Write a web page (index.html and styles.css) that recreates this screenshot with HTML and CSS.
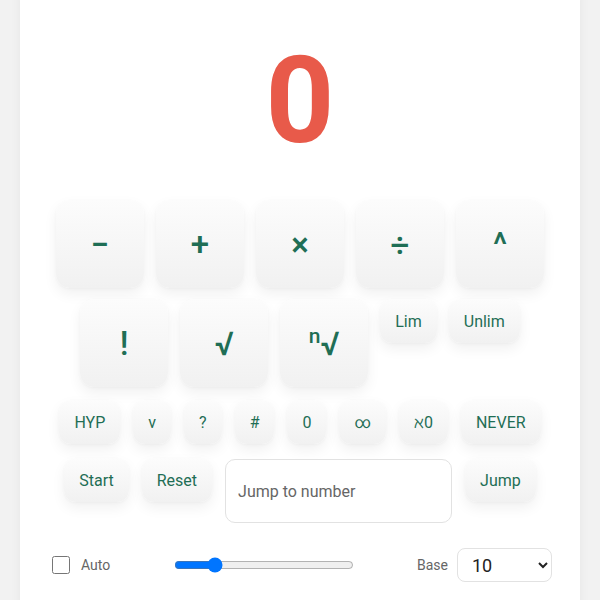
FILE: index.html
```html
<!DOCTYPE html>
<html lang="en">
<head>
<meta charset="UTF-8">
<meta name="viewport" content="width=device-width, initial-scale=1.0">
<title>Counter</title>
<link rel="stylesheet" href="styles.css">
</head>
<body>
<div class="card">
    <div class="display">0</div>

    <div class="pad ops">
        <button class="key big">&minus;</button>
        <button class="key big">+</button>
        <button class="key big">&times;</button>
        <button class="key big">&divide;</button>
        <button class="key big">^</button>
    </div>

    <div class="pad funcs">
        <button class="key big">!</button>
        <button class="key big">&radic;</button>
        <button class="key big"><sup>n</sup>&radic;</button>
        <button class="key small">Lim</button>
        <button class="key small">Unlim</button>
    </div>

    <div class="pad modes">
        <button class="key small">HYP</button>
        <button class="key small">v</button>
        <button class="key small">?</button>
        <button class="key small">#</button>
        <button class="key small">0</button>
        <button class="key small">&infin;</button>
        <button class="key small">&alefsym;0</button>
        <button class="key small">NEVER</button>
    </div>

    <div class="pad jump-row">
        <button class="key small">Start</button>
        <button class="key small">Reset</button>
        <input type="text" class="jump-input" placeholder="Jump to number">
        <button class="key small">Jump</button>
    </div>

    <div class="controls">
        <label class="auto"><input type="checkbox"> Auto</label>
        <input type="range" class="speed" min="0" max="100" value="20">
        <label class="base">Base
            <select>
                <option>10</option>
                <option>2</option>
                <option>16</option>
            </select>
        </label>
    </div>
</div>
</body>
</html>
```

FILE: styles.css
```css
body { margin: 0; background: #f2f2f2;
    font-family: Roboto, "Liberation Sans", sans-serif;
}
.card { margin: -20px 20px 0; background: #fff;
    border-radius: 16px; padding: 61px 20px 40px;
    box-shadow: 0 0 12px rgba(0,0,0,0.05);
}
.display { text-align: center; font-size: 120px;
    line-height: 120px; font-weight: 700; color: #e85a4a;
}
.pad { display: flex; justify-content: center;
    align-items: flex-start; gap: 12px;
}
.ops { margin-top: 39px; }
.funcs { margin-top: 11px; }
.modes { margin-top: 13px; gap: 13px; }
.jump-row { margin-top: 14px; gap: 13px; }
.key { border: none; color: #1f6e55; font-family: inherit;
    font-weight: 400; border-radius: 14px; cursor: pointer;
    background: linear-gradient(#fcfcfc, #f1f1f1);
    box-shadow: 0 6px 14px rgba(0,0,0,0.06),
        0 1px 3px rgba(0,0,0,0.03);
}
.big { width: 88px; height: 88px; font-size: 33px; font-weight: 500; }
.big sup { font-size: 21px; vertical-align: 12px; }
.small { height: 44px; font-size: 16px; padding: 0 15px;
    border-radius: 12px;
}
.jump-input { width: 227px; height: 64px; box-sizing: border-box;
    border: 1px solid #e2e2e2; border-radius: 10px;
    padding: 0 12px; font-size: 16px; font-family: inherit;
    margin-top: 1px;
}
.jump-input::placeholder { color: #666; }
.controls { display: flex; align-items: center;
    margin-top: 25px; padding: 0 8px 0 12px;
    font-size: 14px; color: #666;
}
.auto { display: flex; align-items: center; gap: 11px; }
.auto input { width: 18px; height: 18px; margin: 0; }
.speed { width: 180px; margin: 0 0 0 64px; }
.base { margin-left: auto; display: flex; align-items: center; gap: 9px; }
.base select { width: 95px; height: 34px; font-size: 18px;
    font-family: inherit; border: 1px solid #e2e2e2;
    border-radius: 8px; background: #fff; padding: 0 10px;
    color: #222;
}
```
